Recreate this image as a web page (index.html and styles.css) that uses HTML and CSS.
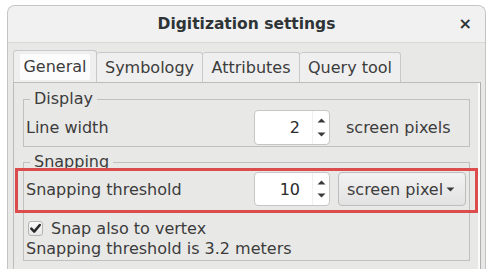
FILE: index.html
```html
<!DOCTYPE html>
<html>
<head>
<meta charset="utf-8">
<link rel="stylesheet" href="styles.css">
</head>
<body>
<div class="window">
  <div class="titlebar">
    <span class="title">Digitization settings</span>
    <span class="close">×</span>
  </div>
  <div class="content">
    <div class="tabs">
      <div class="tab active"><span class="tab-focus">General</span></div>
      <div class="tab w-sym">Symbology</div>
      <div class="tab w-att">Attributes</div>
      <div class="tab w-qry">Query tool</div>
    </div>
    <div class="panel">
      <fieldset class="group group-display">
        <legend>Display</legend>
        <div class="row">
          <span class="label">Line width</span>
          <div class="spin">
            <span class="spin-value">2</span>
            <span class="spin-arrows">
              <svg width="9" height="5" viewBox="0 0 9 5"><path d="M0.5 4.5 L4.5 0.5 L8.5 4.5 Z" fill="#3a3a3a"/></svg>
              <svg width="9" height="5" viewBox="0 0 9 5"><path d="M0.5 0.5 L4.5 4.5 L8.5 0.5 Z" fill="#3a3a3a"/></svg>
            </span>
          </div>
          <span class="unit">screen pixels</span>
        </div>
      </fieldset>
      <fieldset class="group group-snap">
        <legend>Snapping</legend>
        <div class="row">
          <span class="label">Snapping threshold</span>
          <div class="spin">
            <span class="spin-value">10</span>
            <span class="spin-arrows">
              <svg width="9" height="5" viewBox="0 0 9 5"><path d="M0.5 4.5 L4.5 0.5 L8.5 4.5 Z" fill="#3a3a3a"/></svg>
              <svg width="9" height="5" viewBox="0 0 9 5"><path d="M0.5 0.5 L4.5 4.5 L8.5 0.5 Z" fill="#3a3a3a"/></svg>
            </span>
          </div>
          <div class="combo">
            <span class="combo-text">screen pixel</span>
            <svg class="combo-arrow" width="9" height="5" viewBox="0 0 9 5"><path d="M0.5 0.5 L4.5 4.5 L8.5 0.5 Z" fill="#3a3a3a"/></svg>
          </div>
        </div>
        <div class="check-row">
          <span class="checkbox">
            <svg width="13" height="13" viewBox="0 0 13 13"><path d="M2.3 6.6 L5.2 9.6 L10.8 3.0" fill="none" stroke="#2a2a2a" stroke-width="2.5" stroke-linecap="round" stroke-linejoin="round"/></svg>
          </span>
          <span class="check-label">Snap also to vertex</span>
        </div>
        <div class="info">Snapping threshold is 3.2 meters</div>
      </fieldset>
    </div>
  </div>
</div>
<div class="highlight"></div>
</body>
</html>
```

FILE: styles.css
```css
html, body {
  margin: 0;
  padding: 0;
  background: #ffffff;
  overflow: hidden;
}
body {
  padding: 5px 0 0 7px;
  width: 494px;
  height: 269px;
  box-sizing: border-box;
  font-family: "DejaVu Sans", sans-serif;
  font-size: 16px;
  color: #3c3c3c;
  position: relative;
}
.window {
  width: 479px;
  height: 270px;
  box-sizing: border-box;
  border: 1px solid #c4c4c4;
  border-bottom: none;
  border-radius: 8px 8px 0 0;
  overflow: hidden;
  background: #e8e8e7;
}
.titlebar {
  height: 36px;
  background: #f1f1f1;
  border-bottom: 1px solid #d9d9d9;
  display: flex;
  align-items: center;
  justify-content: center;
  position: relative;
}
.title {
  font-weight: bold;
  font-size: 15.5px;
  color: #2e3436;
}
.close {
  position: absolute;
  right: 13px;
  top: 8px;
  font-weight: bold;
  font-size: 16px;
  color: #2e3436;
}
.content {
  padding: 7px 4px 0 5px;
  background: #e8e8e7;
}
.tabs {
  display: flex;
  align-items: flex-end;
  height: 32px;
}
.tab {
  flex: none;
  box-sizing: border-box;
  height: 30px;
  border: 1px solid #c8c8c8;
  border-bottom: none;
  border-left: none;
  border-radius: 3px 3px 0 0;
  background: #efefef;
  display: flex;
  align-items: center;
  justify-content: center;
  color: #3c3c3c;
}
.tab.active {
  width: 84px;
  height: 32px;
  border-left: 1px solid #c8c8c8;
  background: #efefef;
}
.tab-focus {
  background: #fcfcfc;
  padding: 3px 3px 4px;
  border-radius: 2px;
  line-height: 19px;
}
.w-sym { width: 106px; }
.w-att { width: 97px; }
.w-qry { width: 101px; }
.panel {
  box-sizing: border-box;
  height: 200px;
  border: 1px solid #bcbcbc;
  border-right-color: #b0b0b0;
  box-shadow: inset -2px 0 0 #fbfbfb;
  background: #e8e8e7;
  padding: 0 10px 0 9px;
}
.group {
  margin: 0;
  border: 1px solid #c0c0c0;
  padding: 0 0 0 2px;
  min-width: 0;
}
.group legend {
  padding: 0 4px;
  margin-left: 4px;
  line-height: 18px;
  color: #3c3c3c;
}
.group-display {
  margin-top: 7px;
  padding-top: 2px;
  padding-bottom: 1px;
}
.group-snap {
  margin-top: 6px;
  padding-top: 1px;
  padding-bottom: 1px;
}
.row {
  display: flex;
  align-items: center;
  height: 35px;
}
.group-snap .row {
  height: 34px;
}
.label {
  width: 228px;
  flex: none;
}
.spin {
  box-sizing: border-box;
  width: 76px;
  height: 100%;
  background: #ffffff;
  border: 1px solid #c6c6c6;
  border-radius: 4px;
  display: flex;
  flex: none;
}
.spin-value {
  flex: 1;
  text-align: right;
  align-self: center;
  padding-right: 12px;
  color: #2a2a2a;
}
.spin-arrows {
  width: 17px;
  border-left: 1px solid #f0f0f0;
  display: flex;
  flex-direction: column;
  align-items: center;
  justify-content: space-around;
  padding: 3px 0;
  box-sizing: border-box;
}
.unit {
  margin-left: 16px;
}
.combo {
  box-sizing: border-box;
  margin-left: 8px;
  width: 128px;
  height: 100%;
  border: 1px solid #bdbdbd;
  border-radius: 4px;
  background: linear-gradient(#f2f2f2, #e2e2e2);
  display: flex;
  align-items: center;
  padding: 0 10px 0 8px;
  flex: none;
}
.combo-text {
  white-space: nowrap;
  flex: none;
}
.combo-arrow {
  margin-left: 3px;
}
.check-row {
  display: flex;
  align-items: center;
  height: 22px;
  margin-top: 11px;
}
.checkbox {
  box-sizing: border-box;
  width: 15px;
  height: 15px;
  border: 1px solid #b4b4b4;
  border-radius: 3px;
  background: linear-gradient(#fafafa, #e8e8e8);
  margin-left: 2px;
  display: flex;
  align-items: center;
  justify-content: center;
}
.check-label {
  margin-left: 8px;
}
.info {
  line-height: 20px;
}
.highlight {
  position: absolute;
  left: 15px;
  top: 168px;
  width: 463px;
  height: 45px;
  box-sizing: border-box;
  border: 3px solid #dc4c4c;
}
```
